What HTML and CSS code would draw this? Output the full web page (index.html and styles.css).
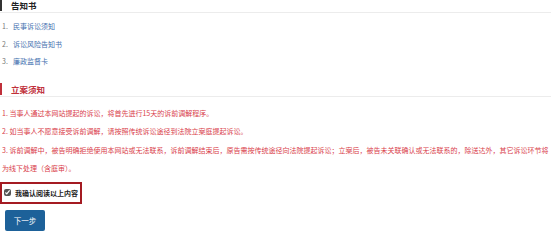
FILE: index.html
```
<!DOCTYPE html>
<html lang="zh-CN">
<head>
  <meta charset="UTF-8" />
  <title>立案须知</title>
  <link rel="stylesheet" href="styles.css">
</head>
<body>
  <div class="page">
    <!-- 告知书 -->
    <div class="section">
      <h3 class="section-title">告知书</h3>
      <ol class="doc-list">
        <li><span class="num">1.</span><a href="#">民事诉讼须知</a></li>
        <li><span class="num">2.</span><a href="#">诉讼风险告知书</a></li>
        <li><span class="num">3.</span><a href="#">廉政监督卡</a></li>
      </ol>
    </div>
    <!-- 立案须知 -->
    <div class="section">
      <h3 class="section-title red">立案须知</h3>
      <div class="notice">
        <p>1. 当事人通过本网站提起的诉讼，将首先进行15天的诉前调解程序。</p>
        <p>2. 如当事人不愿意接受诉前调解，请按照传统诉讼途径到法院立案庭提起诉讼。</p>
        <p>3. 诉前调解中，被告明确拒绝使用本网站或无法联系，诉前调解结束后，原告需按传统途径向法院提起诉讼；立案后，被告未关联确认或无法联系的，除送达外，其它诉讼环节将为线下处理（含庭审）。</p>
      </div>
    </div>
    <label class="confirm">
      <input type="checkbox" checked>
      <span>我确认阅读以上内容</span>
    </label>
    <div>
      <button class="btn-next">下一步</button>
    </div>
  </div>
</body>
</html>
```

FILE: styles.css
```
html, body {
  margin: 0;
  overflow: hidden;
}
body {
  font-family: "Noto Sans CJK SC", "DejaVu Sans", sans-serif;
  background-color: #fff;
  color: #333;
  font-size: 7px;
}
.page {
  width: 551px;
  margin-top: -1px;
}
.section-title {
  margin: 0;
  font-size: 8.5px;
  font-weight: bold;
  color: #222;
  line-height: 12px;
  padding-left: 9px;
  border-left: 3px solid #333;
  margin-left: -1px;
  position: relative;
}
.section-title::after {
  content: "";
  position: absolute;
  left: -2px;
  right: 0;
  bottom: -2px;
  border-bottom: 1px solid #ececec;
}
.section-title.red {
  color: #c0303a;
  border-left-color: #c0303a;
}
.doc-list {
  list-style: none;
  margin: 0;
  padding: 7px 0 0 2px;
}
.doc-list li {
  height: 17.5px;
  line-height: 17.5px;
}
.doc-list .num {
  display: inline-block;
  width: 11px;
  color: #777;
}
.doc-list a {
  color: #3f6fae;
  text-decoration: none;
}
.section + .section {
  margin-top: 12px;
}
.notice {
  padding-top: 9px;
  color: #d9404a;
}
.notice p {
  margin: 0;
  line-height: 18.5px;
  padding-left: 2px;
}
.confirm {
  display: flex;
  align-items: center;
  gap: 4px;
  width: 76px;
  height: 18px;
  margin-top: 4px;
  padding-left: 2px;
  border: 2px solid #a41b22;
  font-weight: bold;
  color: #222;
}
.confirm input {
  margin: 0;
  width: 7px;
  height: 7px;
  accent-color: #555;
}
.btn-next {
  margin: 6px 0 0 5px;
  width: 40px;
  height: 21px;
  border: 0;
  border-radius: 2px;
  background-color: #1d6199;
  color: #fff;
  font-family: inherit;
  font-size: 7.5px;
  padding: 0;
}
```
